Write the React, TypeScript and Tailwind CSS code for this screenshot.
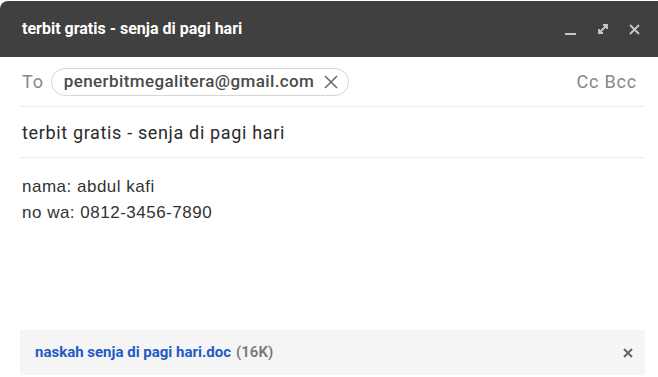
import React from 'react';

const roboto = { fontFamily: 'Roboto, "Liberation Sans", sans-serif' };

export default function App() {
  return (
    <div className="w-[658px] h-[377px] bg-white overflow-hidden" style={roboto}>
      <div className="h-[56px] mt-[1px] bg-[#404040] rounded-tl-lg flex items-center pl-[22px] pr-[18px]">
        <span className="text-white text-[16px] font-bold flex-1">terbit gratis - senja di pagi hari</span>
        <div className="flex items-center gap-[20px] text-[#c8c8c8]">
          <svg width="12" height="14" viewBox="0 0 12 14">
            <rect x="0" y="11" width="11" height="2" fill="currentColor" />
          </svg>
          <svg width="12" height="12" viewBox="0 0 12 12" fill="none" stroke="currentColor" strokeWidth="1.8">
            <path d="M2 10 L10 2 M6 2 H10 V6 M2 6 V10 H6" />
          </svg>
          <svg width="11" height="11" viewBox="0 0 11 11" stroke="currentColor" strokeWidth="1.8">
            <path d="M1 1 L10 10 M10 1 L1 10" />
          </svg>
        </div>
      </div>

      <div className="ml-[20px] mr-[13px]">
        <div className="h-[50px] flex items-center border-b border-[#ececec]">
          <span className="text-[#888] text-[18px] tracking-[0.8px] ml-[2px] mr-[7px]">To</span>
          <div className="h-[28px] flex items-center rounded-full border border-[#d6d6d6] pl-[12px] pr-[10px]">
            <span className="text-[#4a4a4a] text-[17px] font-medium tracking-[0.4px]">penerbitmegalitera@gmail.com</span>
            <svg className="ml-[10px]" width="14" height="14" viewBox="0 0 14 14" stroke="#666" strokeWidth="1.5">
              <path d="M1 1 L13 13 M13 1 L1 13" />
            </svg>
          </div>
          <span className="ml-auto mr-[8px] text-[#888] text-[18px] tracking-[0.8px]">Cc Bcc</span>
        </div>

        <div className="h-[51px] flex items-center border-b border-[#ececec]">
          <span className="text-[#2a2a2a] text-[18px] tracking-[0.65px] ml-[2px]">terbit gratis - senja di pagi hari</span>
        </div>

        <div className="pt-[16px] pl-[2px] text-[#333] text-[17px] tracking-[0.5px] leading-[26px]" style={{ fontFamily: '"Liberation Sans", Arial, sans-serif' }}>
          <div>nama: abdul kafi</div>
          <div>no wa: 0812-3456-7890</div>
        </div>

        <div className="mt-[104px] h-[45px] bg-[#f5f5f5] flex items-center pl-[15px] pr-[12px]">
          <span className="text-[#1f5bc6] text-[15px] font-bold">naskah senja di pagi hari.doc</span>
          <span className="ml-[5px] text-[#777] text-[15px] font-semibold">(16K)</span>
          <svg className="ml-auto" width="10" height="10" viewBox="0 0 10 10" stroke="#666" strokeWidth="2">
            <path d="M1 1 L9 9 M9 1 L1 9" />
          </svg>
        </div>
      </div>
    </div>
  );
}
